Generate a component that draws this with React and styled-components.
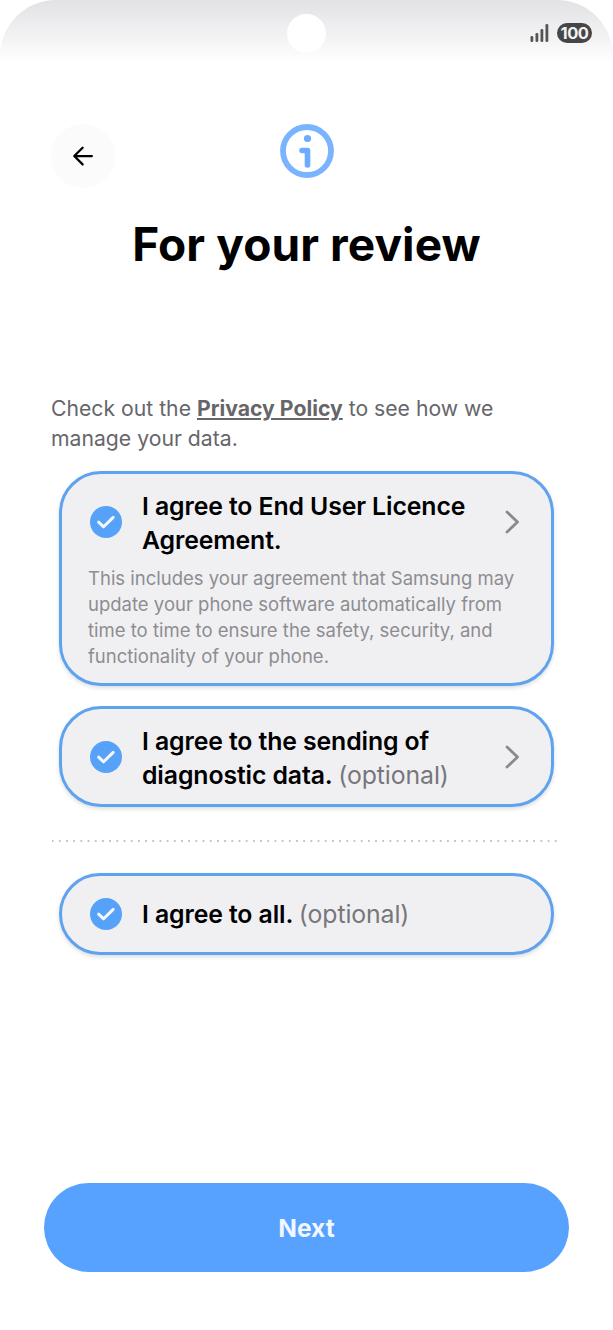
import React from "react";
import styled, { createGlobalStyle } from "styled-components";

const Global = createGlobalStyle`
  html, body { margin: 0; padding: 0; background: #fff; }
  * { box-sizing: border-box; }
  body { font-family: Inter, "Noto Sans", sans-serif; }
`;

const Screen = styled.div`
  width: 613px;
  height: 1330px;
  background: #fff;
  display: flex;
  flex-direction: column;
  overflow: hidden;
`;

const StatusBar = styled.div`
  position: relative;
  flex: none;
  height: 62px;
  border-radius: 56px 56px 0 0;
  background: linear-gradient(#e2e2e5 0%, #ececee 35%, #fafafa 85%, #ffffff 100%);
  display: flex;
  justify-content: flex-end;
  align-items: center;
  gap: 8px;
  padding: 4px 21px 0 0;
`;

const PunchHole = styled.div`
  position: absolute;
  left: 287px;
  top: 14px;
  width: 39px;
  height: 39px;
  border-radius: 50%;
  background: #fff;
`;

const Battery = styled.div`
  width: 35px;
  height: 20px;
  border-radius: 10px;
  background: #464648;
  color: #f2f2f2;
  font-size: 16.5px;
  font-weight: 700;
  letter-spacing: -0.5px;
  line-height: 20px;
  text-align: center;
`;

const Header = styled.header`
  position: relative;
  flex: none;
  height: 62px;
  margin-top: 62px;
  display: flex;
  justify-content: center;
`;

const BackButton = styled.button`
  position: absolute;
  left: 51px;
  top: 0;
  width: 64px;
  height: 64px;
  border: 0;
  border-radius: 50%;
  background: #fbfbfb;
  padding: 0;
  display: flex;
  align-items: center;
  justify-content: center;
`;

const Title = styled.h1`
  flex: none;
  margin: 28px 0 0;
  height: 60px;
  font-size: 46px;
  line-height: 60px;
  font-weight: 700;
  letter-spacing: 0.1px;
  color: #000;
  text-align: center;
`;

const Intro = styled.p`
  margin: 119px 51px 0;
  height: 78px;
  font-size: 21.2px;
  line-height: 30px;
  color: #66666a;
`;

const PolicyLink = styled.a`
  font-weight: 700;
  color: #66666a;
  text-decoration: underline;
`;

const Cards = styled.div`
  display: flex;
  flex-direction: column;
  margin: 0 59px 0;
`;

const Card = styled.div`
  width: 495px;
  min-height: ${(p) => p.$height}px;
  margin-top: ${(p) => p.$top}px;
  border: 3px solid #5fa2ee;
  border-radius: 42px;
  background: #f0f0f3;
  box-shadow: 0 2px 4px rgba(0, 0, 0, 0.14);
  display: flex;
  flex-direction: column;
  justify-content: ${(p) => (p.$tall ? "flex-start" : "center")};
  padding: ${(p) => (p.$tall ? "12px" : "0")} 0 0;
`;

const CardRow = styled.div`
  display: grid;
  grid-template-columns: 32px 1fr 16px;
  column-gap: 20px;
  align-items: center;
  padding: 0 31px 0 28px;
`;

const CardTitle = styled.div`
  margin-top: ${(p) => (p.$single ? 0 : 3)}px;
  font-size: 24.8px;
  line-height: 34px;
  font-weight: 600;
  letter-spacing: -0.1px;
  color: #000;
`;

const Optional = styled.span`
  font-weight: 400;
  color: #77777b;
`;

const CardBody = styled.p`
  margin: 8px 0 0;
  padding: 0 20px 0 26px;
  font-size: 18.5px;
  line-height: 26px;
  color: #8d8d91;
`;

const Dots = styled.div`
  margin: 33px 53px 0 52px;
  height: 2px;
  background-image: radial-gradient(circle, #c4c4c6 1px, transparent 1.2px);
  background-size: 7.2px 2px;
  background-position: -3px 0;
`;

const Spacer = styled.div`
  flex: 1;
`;

const NextButton = styled.button`
  flex: none;
  width: 525px;
  height: 89px;
  margin: 0 0 58px 44px;
  border: 0;
  border-radius: 45px;
  background: #56a2fe;
  color: #f2f7ff;
  font-family: inherit;
  font-size: 24.5px;
  font-weight: 700;
`;

const Check = () => (
  <svg width="32" height="32" viewBox="0 0 32 32">
    <circle cx="16" cy="16" r="16" fill="#56a2f8" />
    <path d="M8.6 16.2l5 4.6 9.6-9.4" fill="none" stroke="#f4f8fe" strokeWidth="3" strokeLinecap="round" strokeLinejoin="round" />
  </svg>
);

const Chevron = () => (
  <svg width="16" height="24" viewBox="0 0 16 24">
    <path d="M3 2l10.5 10L3 22" fill="none" stroke="#8a8a8e" strokeWidth="2.8" strokeLinecap="round" strokeLinejoin="round" />
  </svg>
);

const Signal = () => (
  <svg width="19" height="20" viewBox="0 0 19 20">
    <g fill="#555557">
      <rect x="0.5" y="13" width="2.8" height="6" rx="1.3" />
      <rect x="5.5" y="10" width="2.8" height="9" rx="1.3" />
      <rect x="10.5" y="6" width="2.8" height="13" rx="1.3" />
      <rect x="15.5" y="1" width="2.8" height="18" rx="1.3" />
    </g>
  </svg>
);

const Arrow = () => (
  <svg width="24" height="24" viewBox="0 0 24 24">
    <path d="M22 12H2.5M11.5 2.5L2 12l9.5 9.5" fill="none" stroke="#000" strokeWidth="2.6" strokeLinecap="round" strokeLinejoin="round" transform="translate(1.5 1.5) scale(0.88)" />
  </svg>
);

const InfoIcon = () => (
  <svg width="54" height="54" viewBox="0 0 54 54">
    <circle cx="27" cy="27" r="24" fill="none" stroke="#7ab4fe" strokeWidth="5.8" />
    <circle cx="27.5" cy="14.5" r="3.6" fill="#6cacfe" />
    <path d="M22 26.5H27.5V41" fill="none" stroke="#6cacfe" strokeWidth="5.6" strokeLinecap="round" strokeLinejoin="round" />
  </svg>
);

export default function App() {
  return (
    <Screen>
      <Global />
      <StatusBar>
        <PunchHole />
        <Signal />
        <Battery>100</Battery>
      </StatusBar>
      <Header>
        <BackButton aria-label="Back"><Arrow /></BackButton>
        <InfoIcon />
      </Header>
      <Title>For your review</Title>
      <Intro>
        Check out the <PolicyLink>Privacy Policy</PolicyLink> to see how we manage your data.
      </Intro>
      <Cards>
        <Card $height={215} $top={0} $tall>
          <CardRow>
            <Check />
            <CardTitle>I agree to End User Licence Agreement.</CardTitle>
            <Chevron />
          </CardRow>
          <CardBody>
            This includes your agreement that Samsung may update your phone software automatically from time to time to ensure the safety, security, and functionality of your phone.
          </CardBody>
        </Card>
        <Card $height={101} $top={20}>
          <CardRow>
            <Check />
            <CardTitle>I agree to the sending of diagnostic data. <Optional>(optional)</Optional></CardTitle>
            <Chevron />
          </CardRow>
        </Card>
      </Cards>
      <Dots />
      <Cards>
        <Card $height={82} $top={31}>
          <CardRow>
            <Check />
            <CardTitle $single>I agree to all. <Optional>(optional)</Optional></CardTitle>
            <span />
          </CardRow>
        </Card>
      </Cards>
      <Spacer />
      <NextButton>Next</NextButton>
    </Screen>
  );
}
